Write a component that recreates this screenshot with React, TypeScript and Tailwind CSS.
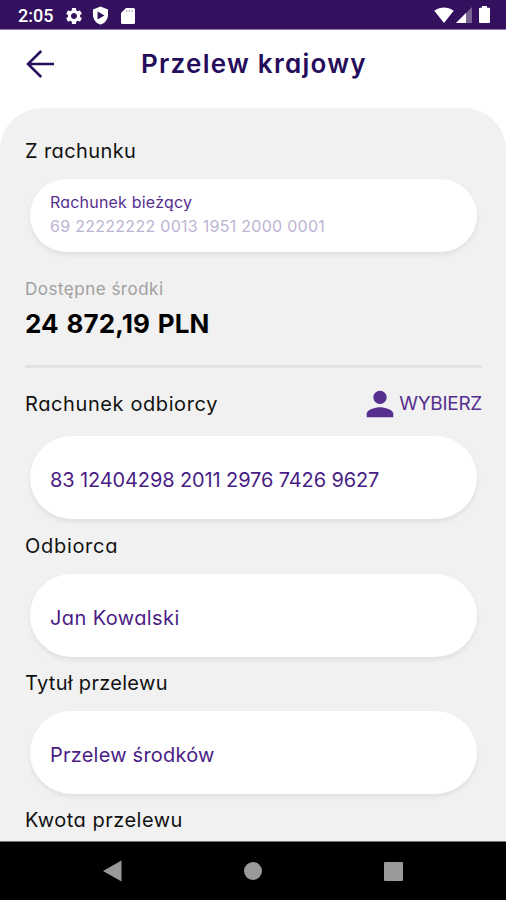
import { MdPerson, MdSettings } from "react-icons/md";

function StatusBar() {
  return (
    <div className="flex h-[30px] shrink-0 items-start justify-between border-b border-[#8d7ba8] bg-[#34115f] pl-[18px] pr-[16px] pt-1.5 text-white">
      <div className="flex items-center">
        <span className="w-[46px] font-['Roboto',sans-serif] text-[18px] font-medium leading-5">2:05</span>
        <MdSettings className="-mt-[1px] size-5" />
        <svg viewBox="0 0 24 24" className="-mt-[1px] ml-[7px] size-[19px]" fill="currentColor">
          <path fillRule="evenodd" d="M12 0.500 2.500 4.500v6.500c0 5.800 4 11 9.500 12.500 5.500-1.500 9.500-6.700 9.500-12.500V4.500zM8.300 7l8.700 5-8.700 5z" />
        </svg>
        <svg viewBox="0 0 14 16" className="-mt-[1px] ml-[11px] h-4 w-3.5" fill="currentColor">
          <path d="M5 0h7.500Q14 0 14 1.500v13q0 1.500-1.500 1.500h-11Q0 16 0 14.500V5z" />
          <path d="M5.200 2h1.200v2H5.200zM7.800 2H9v2H7.800zM10.400 2h1.200v2h-1.200z" className="fill-[#34115f]" opacity="0.35" />
        </svg>
      </div>
      <div className="flex items-start">
        <svg viewBox="0 0 24 24" className="-mt-[1px] size-5" fill="currentColor">
          <path d="M12 21.500 23.640 7C23.190 6.660 18.710 3 12 3S.810 6.660.360 7z" />
        </svg>
        <svg viewBox="0 0 16 16" className="ml-[2px] mt-[1px] size-4" fill="currentColor">
          <path d="M16 0v16H0z" opacity="0.35" />
          <path d="M10 6v10H0z" />
        </svg>
        <svg viewBox="0 0 11 17" className="ml-[7px] h-[17px] w-[11px]" fill="currentColor">
          <path d="M3 0h5v1.700h2q1 0 1 1V16q0 1-1 1H1q-1 0-1-1V2.700q0-1 1-1h2z" />
        </svg>
      </div>
    </div>
  );
}

function Header() {
  return (
    <div className="flex h-[78px] shrink-0 items-start bg-white pt-4 text-[#260d5c]">
      <svg viewBox="0 0 28 28" className="ml-[26px] mt-[4px] size-7" fill="none" stroke="currentColor" strokeWidth="2.5">
        <path d="M28 14H2M15.200 1 2 14l13.200 13" />
      </svg>
      <h1 className="ml-[87px] mt-[1px] text-[26px] font-semibold leading-[34px] tracking-[1.25px]">Przelew krajowy</h1>
    </div>
  );
}

function Field({ value, className }: { value: string; className: string }) {
  return (
    <div className="ml-[5px] mr-[5px] flex h-[83px] items-center rounded-full bg-white pl-[20px] pt-[5px] shadow-[0_3px_5px_rgba(0,0,0,0.07)]">
      <span className={`text-[20px] leading-5 text-[#4a1d85] ${className}`}>{value}</span>
    </div>
  );
}

function NavBar() {
  return (
    <div className="flex h-[59px] shrink-0 items-center justify-between border-t border-[#777] bg-black pl-[103px] pr-[103px] text-[#999]">
      <svg viewBox="0 0 19 22" className="h-[22px] w-[19px]" fill="currentColor">
        <path d="M18.500 .5v21L0 11z" />
      </svg>
      <div className="size-[18px] rounded-full bg-current" />
      <div className="size-[19px] rounded-[1px] bg-current" />
    </div>
  );
}

function App() {
  return (
    <div className="flex h-[900px] w-full flex-col overflow-hidden bg-white font-['Inter',sans-serif] [font-feature-settings:'cv11']">
      <StatusBar />
      <Header />
      <main className="min-h-0 grow overflow-hidden rounded-t-[42px] bg-[#f1f1f1] pl-[25px] pr-6 pt-[33px] text-[#111]">
        <h2 className="text-[20px] leading-5 tracking-[0.4px]">Z rachunku</h2>
        <div className="ml-[5px] mr-[5px] mt-[18px] h-[73px] rounded-full bg-white pl-[20px] pt-[11px] text-[16px] leading-6 shadow-[0_3px_5px_rgba(0,0,0,0.07)]">
          <p className="tracking-[0.2px] text-[#56308e]">Rachunek bieżący</p>
          <p className="tracking-[0.28px] text-[#bdb3d3]">69 22222222 0013 1951 2000 0001</p>
        </div>
        <p className="mt-[27px] text-[17px] leading-5 tracking-[0.5px] text-[#a0a0a0]">Dostępne środki</p>
        <p className="mt-[10px] text-[26px] font-bold leading-[30px] tracking-[0.1px] text-black [word-spacing:1.5px]">24 872,19 PLN</p>
        <div className="mt-[26px] h-[3px] bg-[#e1e1e1]" />
        <div className="mt-[20px] flex h-[32px] items-center justify-between">
          <h2 className="text-[20px] leading-5 tracking-[0.6px]">Rachunek odbiorcy</h2>
          <button className="flex items-center text-[19px] leading-5 tracking-[-0.3px] text-[#56308e]">
            <MdPerson className="-mr-[1px] size-10" />
            <span>WYBIERZ</span>
          </button>
        </div>
        <div className="mt-[16px]">
          <Field value="83 12404298 2011 2976 7426 9627" className="tracking-[-0.12px]" />
        </div>
        <h2 className="mb-[18px] mt-[17px] text-[20px] leading-5 tracking-[0.7px]">Odbiorca</h2>
        <Field value="Jan Kowalski" className="tracking-[0.4px]" />
        <h2 className="mb-[18px] mt-4 text-[20px] leading-5 tracking-[0.3px]">Tytuł przelewu</h2>
        <Field value="Przelew środków" className="tracking-[0.22px]" />
        <h2 className="mt-4 text-[20px] leading-5 tracking-[0.5px]">Kwota przelewu</h2>
      </main>
      <NavBar />
    </div>
  );
}

export default App;
